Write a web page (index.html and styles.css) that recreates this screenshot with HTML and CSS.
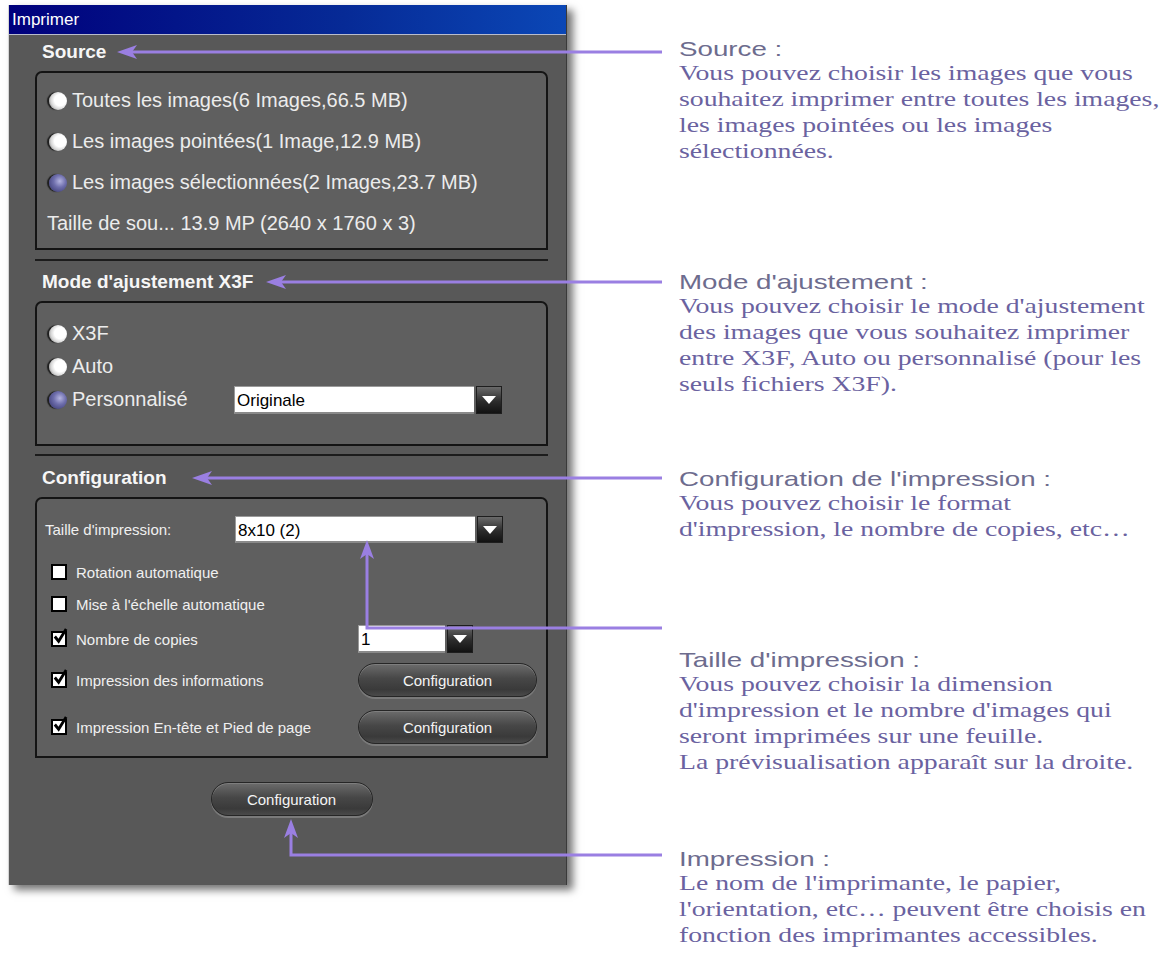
FILE: index.html
```html
<!DOCTYPE html>
<html lang="fr">
<head>
    <meta charset="UTF-8">
    <title>Imprimer</title>
    <link rel="stylesheet" href="styles.css">
</head>
<body>
<div class="page">
    <div class="window">
        <div class="titlebar">Imprimer</div>
        <div class="window-body">

            <h3 class="group-title">Source</h3>
            <div class="group group-source">
                <div class="radio-row"><span class="radio"></span>Toutes les images(6 Images,66.5 MB)</div>
                <div class="radio-row"><span class="radio"></span>Les images pointées(1 Image,12.9 MB)</div>
                <div class="radio-row"><span class="radio checked"></span>Les images sélectionnées(2 Images,23.7 MB)</div>
                <div class="radio-row info">Taille de sou... 13.9 MP (2640 x 1760 x 3)</div>
            </div>
            <div class="separator"></div>

            <h3 class="group-title">Mode d'ajustement X3F</h3>
            <div class="group group-mode">
                <div class="radio-row short"><span class="radio"></span>X3F</div>
                <div class="radio-row short"><span class="radio"></span>Auto</div>
                <div class="radio-row short">
                    <span class="radio checked"></span>
                    <span class="radio-label">Personnalisé</span>
                    <div class="combo">
                        <div class="combo-field">Originale</div>
                        <div class="combo-btn"><span class="arrow-down"></span></div>
                    </div>
                </div>
            </div>
            <div class="separator"></div>

            <h3 class="group-title">Configuration</h3>
            <div class="group group-config">
                <div class="cfg-row size-row">
                    <span class="size-label">Taille d'impression:</span>
                    <div class="combo">
                        <div class="combo-field">8x10 (2)</div>
                        <div class="combo-btn"><span class="arrow-down"></span></div>
                    </div>
                </div>
                <div class="cfg-row check-row rotate-row"><span class="checkbox"></span>Rotation automatique</div>
                <div class="cfg-row check-row scale-row"><span class="checkbox"></span>Mise à l'échelle automatique</div>
                <div class="cfg-row check-row copies-row">
                    <span class="checkbox checked"><svg viewBox="0 0 18 18"><path d="M3 9 L7 14 L15 1" fill="none" stroke="#000" stroke-width="3"/></svg></span>
                    <span class="check-label">Nombre de copies</span>
                    <div class="combo combo-small">
                        <div class="combo-field">1</div>
                        <div class="combo-btn"><span class="arrow-down"></span></div>
                    </div>
                </div>
                <div class="cfg-row check-row info-row">
                    <span class="checkbox checked"><svg viewBox="0 0 18 18"><path d="M3 9 L7 14 L15 1" fill="none" stroke="#000" stroke-width="3"/></svg></span>
                    <span class="check-label">Impression des informations</span>
                    <button class="pill">Configuration</button>
                </div>
                <div class="cfg-row check-row header-row">
                    <span class="checkbox checked"><svg viewBox="0 0 18 18"><path d="M3 9 L7 14 L15 1" fill="none" stroke="#000" stroke-width="3"/></svg></span>
                    <span class="check-label">Impression En-tête et Pied de page</span>
                    <button class="pill">Configuration</button>
                </div>
            </div>

            <div class="footer">
                <button class="pill pill-main">Configuration</button>
            </div>
        </div>
    </div>

    <div class="notes">
        <div class="note">
            <h4>Source :</h4>
            <p>Vous pouvez choisir les images que vous<br>souhaitez imprimer entre toutes les images,<br>les images pointées ou les images<br>sélectionnées.</p>
        </div>
        <div class="note note-mode">
            <h4>Mode d'ajustement :</h4>
            <p>Vous pouvez choisir le mode d'ajustement<br>des images que vous souhaitez imprimer<br>entre X3F, Auto ou personnalisé (pour les<br>seuls fichiers X3F).</p>
        </div>
        <div class="note note-config">
            <h4>Configuration de l'impression :</h4>
            <p>Vous pouvez choisir le format<br>d'impression, le nombre de copies, etc…</p>
        </div>
        <div class="note note-size">
            <h4>Taille d'impression :</h4>
            <p>Vous pouvez choisir la dimension<br>d'impression et le nombre d'images qui<br>seront imprimées sur une feuille.<br>La prévisualisation apparaît sur la droite.</p>
        </div>
        <div class="note note-print">
            <h4>Impression :</h4>
            <p>Le nom de l'imprimante, le papier,<br>l'orientation, etc… peuvent être choisis en<br>fonction des imprimantes accessibles.</p>
        </div>
    </div>

    <!-- callout arrows from each note to its control -->
    <svg class="callouts" width="1162" height="976" viewBox="0 0 1162 976">
        <g stroke="#9a7fe2" stroke-width="3" fill="none">
            <path d="M132 52 H662"/>
            <path d="M281 282 H662"/>
            <path d="M207 478 H662"/>
            <path d="M367 554 V628 H662"/>
            <path d="M291 833 V855 H662"/>
        </g>
        <g fill="#9a7fe2">
            <polygon points="117,52 137,45 132,52 137,59"/>
            <polygon points="266,282 286,275 281,282 286,289"/>
            <polygon points="192,478 212,471 207,478 212,485"/>
            <polygon points="367,540 360,559 367,554 374,559"/>
            <polygon points="291,819 284,838 291,833 298,838"/>
        </g>
    </svg>
</div>
</body>
</html>
```

FILE: styles.css
```css
body, html {
    margin: 0;
    background-color: #ffffff;
    font-family: "Liberation Sans", Arial, sans-serif;
}

.page {
    position: relative;
    width: 1162px;
    height: 976px;
    display: flex;
    align-items: flex-start;
    overflow: hidden;
}

/* dialog window */

.window {
    box-sizing: border-box;
    width: 559px;
    margin: 5px 0 0 8px;
    background-color: #585858;
    border-left: 1px solid #d4d4d4;
    border-right: 1px solid #3a3a3a;
    box-shadow: 6px 5px 8px rgba(0, 0, 0, 0.55);
}

.titlebar {
    box-sizing: border-box;
    height: 30px;
    line-height: 29px;
    padding-left: 3px;
    color: #ffffff;
    font-size: 17px;
    background: linear-gradient(to right, #00007c, #062a96 60%, #0b47b6);
    border-bottom: 1px solid #b9bccb;
}

.window-body {
    padding: 6px 18px 69px 26px;
    color: #ececec;
}

.group-title {
    margin: 0 0 8px 0;
    padding-left: 7px;
    height: 22px;
    line-height: 22px;
    font-size: 19px;
    font-weight: bold;
    color: #f6f6f6;
}

.group {
    background-color: #5f5f5f;
    border: 2px solid #141414;
    border-radius: 7px 7px 0 0;
}

.separator {
    height: 2px;
    background-color: #1c1c1c;
    margin: 9px 0 10px 0;
}

.group-mode + .separator {
    margin: 8px 0 11px 0;
}

/* radio rows */

.group-source {
    padding: 7px 0 4px 12px;
}

.group-mode {
    padding: 14px 0 28px 12px;
}

.radio-row {
    display: flex;
    align-items: center;
    height: 41px;
    font-size: 20px;
}

.radio-row.short {
    height: 33px;
}

.radio-row.info {
    margin-left: -2px;
}

.radio {
    width: 18px;
    height: 18px;
    margin-right: 5px;
    border-radius: 50%;
    flex: none;
    background: radial-gradient(circle at 62% 45%, #ffffff 0, #ffffff 38%, #d6d6d6 62%, #707070 90%, #3a3a3a 100%);
    box-shadow: -2px 0 1px #1e1e1e;
}

.radio.checked {
    background: radial-gradient(circle at 60% 40%, #b4b4e0 0, #6e6eac 40%, #3f3f78 85%, #2a2a4a 100%);
}

.radio-label {
    width: 162px;
}

/* combo boxes */

.combo {
    display: flex;
    gap: 2px;
    height: 28px;
}

.combo-field {
    box-sizing: border-box;
    width: 240px;
    height: 100%;
    padding: 2px 0 0 2px;
    background-color: #ffffff;
    color: #000000;
    font-size: 17px;
    line-height: 24px;
    border-top: 1px solid #9a9a9a;
    border-left: 1px solid #9a9a9a;
    border-bottom: 2px solid #8a8a8a;
}

.combo-btn {
    width: 26px;
    height: 100%;
    display: flex;
    align-items: center;
    justify-content: center;
    background: linear-gradient(#6a6a6a, #2c2c2c 55%, #121212);
    border: 1px solid #1e1e1e;
    box-sizing: border-box;
}

.arrow-down {
    width: 0;
    height: 0;
    border-left: 7px solid transparent;
    border-right: 7px solid transparent;
    border-top: 8px solid #ffffff;
}

.combo-small .combo-field {
    width: 87px;
}

/* configuration group */

.group-config {
    padding: 17px 0 12px 8px;
}

.cfg-row {
    display: flex;
    align-items: center;
    font-size: 15px;
    color: #f0f0f0;
}

.size-row {
    height: 27px;
}

.size-row .combo {
    height: 27px;
}

.size-label {
    width: 190px;
}

.check-row {
    padding-left: 6px;
}

.rotate-row {
    height: 30px;
    margin-top: 14px;
}

.scale-row {
    height: 30px;
    margin-top: 2px;
}

.copies-row {
    height: 28px;
    margin-top: 6px;
}

.info-row {
    height: 34px;
    margin-top: 10px;
}

.header-row {
    height: 34px;
    margin-top: 13px;
}

.checkbox {
    position: relative;
    box-sizing: border-box;
    width: 16px;
    height: 16px;
    margin-right: 9px;
    flex: none;
    background-color: #ffffff;
    border: 2px solid #000000;
}

.checkbox svg {
    position: absolute;
    left: -1px;
    top: -5px;
    width: 17px;
    height: 17px;
}

.check-label {
    width: 282px;
}

/* rounded buttons */

.pill {
    box-sizing: border-box;
    width: 179px;
    height: 34px;
    border-radius: 17px;
    border: 1px solid #262626;
    background: linear-gradient(#6c6c6c, #474747 45%, #3a3a3a 80%, #4a4a4a);
    box-shadow: inset 0 1px 0 #7e7e7e, 0 2px 0 #7a7a7a;
    color: #f4f4f4;
    font-family: "Liberation Sans", Arial, sans-serif;
    font-size: 15px;
    padding: 0;
    cursor: pointer;
}

.footer {
    display: flex;
    justify-content: center;
    margin-top: 24px;
}

.pill-main {
    width: 162px;
}

/* notes on the right */

.notes {
    margin-left: 112px;
    padding-top: 37px;
    white-space: nowrap;
    transform: scaleX(1.32);
    transform-origin: 0 0;
}

.note h4 {
    margin: 0;
    height: 23px;
    line-height: 23px;
    font-size: 21px;
    font-weight: normal;
    color: #6d6c8e;
}

.note p {
    margin: 0;
    font-family: "Liberation Serif", "Times New Roman", serif;
    font-size: 21px;
    line-height: 26px;
    color: #6a62a0;
}

.note-mode {
    margin-top: 106px;
}

.note-config {
    margin-top: 70px;
}

.note-size {
    margin-top: 106px;
}

.note-print {
    margin-top: 72px;
}

.callouts {
    position: absolute;
    top: 0;
    left: 0;
    pointer-events: none;
}
```
